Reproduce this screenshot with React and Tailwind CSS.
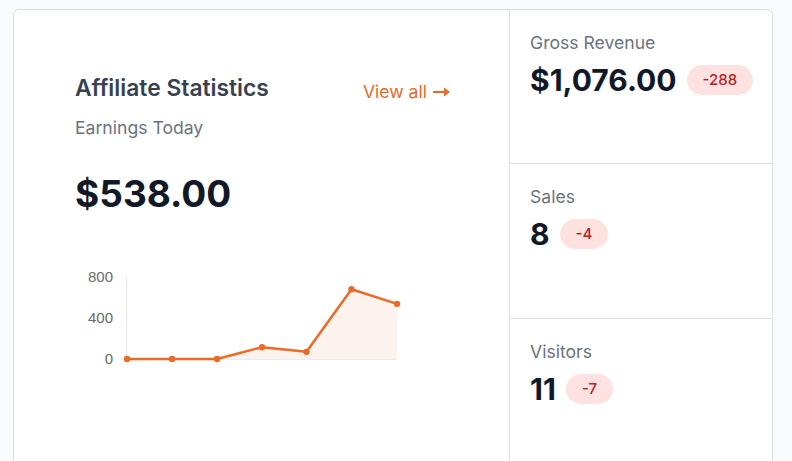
import React from "react";

const values = [0, 0, 0, 115, 70, 680, 538];
const xs = [52, 97, 142, 187, 231.5, 276.5, 322];
const y0 = 97;
const scale = 82 / 800;
const pts = values.map((v, i) => [xs[i], y0 - v * scale]);

function EarningsChart() {
  const line = pts.map((p, i) => `${i ? "L" : "M"}${p[0]},${p[1]}`).join(" ");
  const area = `${line} L${xs[xs.length - 1]},${y0} L${xs[0]},${y0} Z`;
  return (
    <svg width="340" height="110" viewBox="0 0 340 110" className="block">
      <g fill="#6b6b6b" fontFamily="'Liberation Sans', Arial, sans-serif" fontSize="15" textAnchor="end">
        <text x="38" y="20">800</text>
        <text x="38" y="61">400</text>
        <text x="38" y="102">0</text>
      </g>
      <line x1="51.5" y1="15" x2="51.5" y2="97" stroke="#e6e6e6" strokeWidth="1" />
      <line x1="52" y1="97.5" x2="322" y2="97.5" stroke="#ececec" strokeWidth="1" />
      <path d={area} fill="rgba(235,106,40,0.08)" />
      <path d={line} fill="none" stroke="#eb6a28" strokeWidth="2.5" strokeLinejoin="round" />
      {pts.map((p, i) => (
        <circle key={i} cx={p[0]} cy={p[1]} r="3.2" fill="#eb6a28" />
      ))}
    </svg>
  );
}

function Badge({ children }) {
  return (
    <span className="inline-flex h-[30px] items-center rounded-full bg-[#fee2e2] px-4 text-[15px] font-medium text-[#b91c1c]">
      {children}
    </span>
  );
}

function Stat({ label, value, delta, h, last }) {
  return (
    <div className={`${h} ${last ? "" : "border-b border-[#dcdee3]"} pl-5 pt-[21px]`}>
      <div className="text-[17.6px] leading-6 text-[#6b7280]">{label}</div>
      <div className="mt-[7px] flex items-center gap-[10px]">
        <span className="text-[30px] font-bold leading-9 text-[#111827]">{value}</span>
        <Badge>{delta}</Badge>
      </div>
    </div>
  );
}

export default function App() {
  return (
    <div
      className="h-[461px] w-[792px] overflow-hidden bg-[#f9fafb] pl-[13px] pr-[19px] pt-[9px]"
      style={{ fontFamily: "Inter, 'Noto Sans', sans-serif" }}
    >
      <div className="flex h-[470px] rounded-t-md border border-[#dcdee3] bg-white">
        <div className="w-[496px] border-r border-[#dcdee3] pl-[61px] pr-[59px] pt-[64px]">
          <div className="flex items-start justify-between">
            <div className="text-[22.8px] font-semibold leading-7 text-[#374151]">Affiliate Statistics</div>
            <a className="mt-[6px] flex items-center gap-[6px] text-[17.6px] leading-6 text-[#eb6a28]">
              View all
              <svg width="17" height="10" viewBox="0 0 17 10" fill="#eb6a28">
                <rect x="0" y="4" width="12" height="2" />
                <path d="M11 0.5 L17 5 L11 9.5 Z" />
              </svg>
            </a>
          </div>
          <div className="mt-[12px] text-[17.6px] leading-6 text-[#6b7280]">Earnings Today</div>
          <div className="mt-[34px] text-[37px] font-bold leading-10 text-[#111827]">$538.00</div>
          <div className="mt-[48px]">
            <EarningsChart />
          </div>
        </div>
        <div className="flex-1">
          <Stat label="Gross Revenue" value="$1,076.00" delta="-288" h="h-[154px]" />
          <Stat label="Sales" value="8" delta="-4" h="h-[155px]" />
          <Stat label="Visitors" value="11" delta="-7" h="h-[155px]" last />
        </div>
      </div>
    </div>
  );
}
